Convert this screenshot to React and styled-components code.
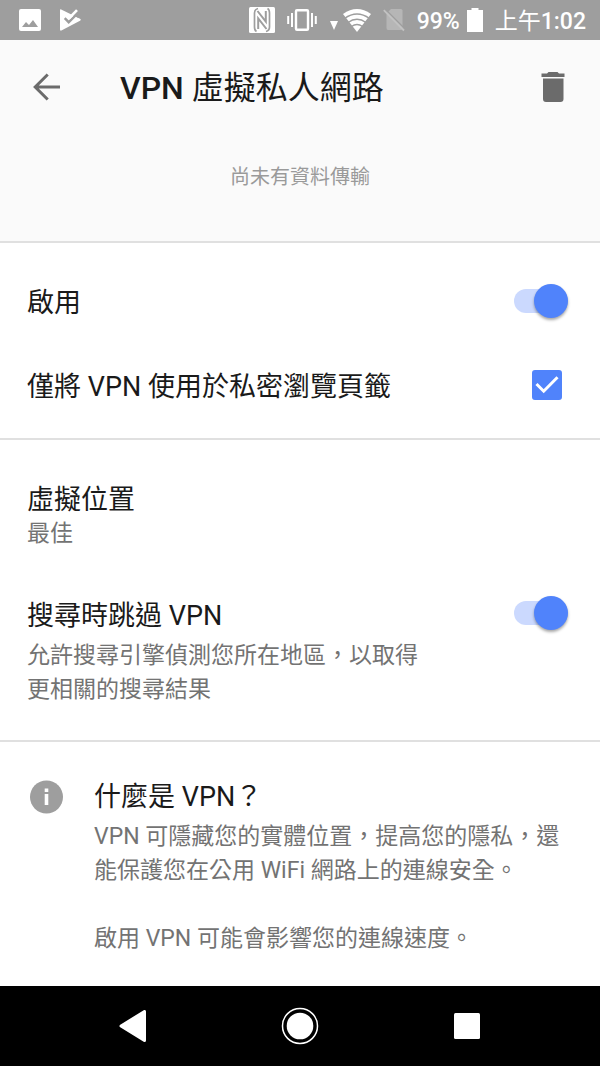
import React, { useState } from 'react';
import styled, { createGlobalStyle } from 'styled-components';

const GlobalStyle = createGlobalStyle`
  * {
    box-sizing: border-box;
  }

  body {
    margin: 0;
    background: #fff;
    color: #1a1a1a;
    font-family: Roboto, 'Noto Sans CJK TC', sans-serif;
  }
`;

const Screen = styled.div`
  display: flex;
  flex-direction: column;
  min-height: 100vh;
`;

const StatusBar = styled.div`
  display: flex;
  align-items: center;
  justify-content: space-between;
  height: 40px;
  padding: 0 14px 0 19px;
  background: #9e9e9e;
  color: #fff;
  font-size: 23px;
  white-space: nowrap;
`;

const StatusGroup = styled.div`
  display: flex;
  align-items: center;
  gap: ${props => props.$gap}px;
`;

const StatusText = styled.span`
  padding-top: 3px;
  font-weight: 500;
  line-height: 37px;
`;

const Regular = styled.span`
  font-weight: 400;
`;

const Header = styled.header`
  background: #fafafa;
  border-bottom: 2px solid #e0e0e0;
`;

const Toolbar = styled.div`
  display: flex;
  align-items: center;
  height: 94px;
  padding: 0 32px 0 27px;
`;

const IconButton = styled.button`
  display: flex;
  padding: 0;
  border: 0;
  background: none;
  color: ${props => props.$color};
  cursor: pointer;
`;

const Title = styled.h1`
  flex: 1;
  margin: 0 0 0 53px;
  padding-top: 2px;
  font-size: 32px;
  font-weight: 400;
  line-height: 40px;
`;

const Strong = styled.span`
  font-weight: 500;
`;

const Usage = styled.p`
  margin: 0;
  padding: 27px 0 48px;
  color: #9a9a9a;
  font-size: 20px;
  line-height: 32px;
  text-align: center;
`;

const Section = styled.section`
  padding: ${props => props.$padding};

  & + & {
    border-top: 2px solid #e0e0e0;
  }
`;

const Row = styled.label`
  display: flex;
  align-items: center;
  justify-content: space-between;
  gap: 80px;
  min-height: 84px;
  cursor: pointer;
`;

const Item = styled.div`
  display: flex;
  align-items: flex-start;
  justify-content: space-between;
  gap: ${props => props.$gap || 0}px;

  & + & {
    margin-top: 45px;
  }
`;

const Label = styled.div`
  padding-top: 3px;
  font-size: 27px;
  line-height: 34px;
`;

const Detail = styled.div`
  margin-top: ${props => (props.$spaced ? 6 : 0)}px;
  color: #737373;
  font-size: 23px;
  line-height: 34px;
`;

const Paragraph = styled.p`
  margin: 0;

  & + & {
    margin-top: 34px;
  }
`;

// the thumb is taller than the track and hangs over it on both sides
const Switch = styled.input.attrs({ type: 'checkbox', role: 'switch' })`
  display: flex;
  flex: none;
  align-items: center;
  width: 54px;
  height: 24px;
  margin: 5px 0;
  appearance: none;
  background: #cbd9fe;
  border-radius: 12px;
  cursor: pointer;

  &::before {
    content: '';
    flex: none;
    width: 34px;
    height: 34px;
    margin-left: 20px;
    border-radius: 50%;
    background: #5083fb;
    box-shadow: 0 2px 3px rgba(0, 0, 0, 0.35);
  }

  &:not(:checked) {
    background: #c4c4c4;
  }

  &:not(:checked)::before {
    margin-left: 0;
    background: #f1f1f1;
  }
`;

const TickBox = styled.span`
  position: relative;
  display: flex;
  margin-right: 6px;

  svg {
    position: absolute;
    inset: 0;
    pointer-events: none;
  }
`;

const Tick = styled.input.attrs({ type: 'checkbox' })`
  width: 30px;
  height: 30px;
  margin: 0;
  appearance: none;
  border: 3px solid #737373;
  border-radius: 3px;
  cursor: pointer;

  &:checked {
    border-color: #5083fb;
    background: #5083fb;
  }
`;

const InfoRow = styled.div`
  display: flex;
  align-items: flex-start;
  gap: 30px;

  > svg {
    flex: none;
    margin-top: 3px;
  }
`;

const NavBar = styled.nav`
  display: grid;
  grid-template-columns: repeat(3, 1fr);
  align-items: center;
  justify-items: center;
  height: 80px;
  margin-top: auto;
  padding: 0 50px;
  background: #000;
`;

const PictureIcon = () => (
  <svg width="22" height="22" viewBox="0 0 22 22">
    <rect width="22" height="22" rx="2" fill="#fff" />
    <path d="M3 18l4-5 3 3 4-5 5 7z" fill="#9e9e9e" />
  </svg>
);

const PlayCheckIcon = () => (
  <svg width="21" height="22" viewBox="0 0 21 22">
    <path d="M0 1.2Q0 0 1.2.5L20 9.8q1.5 1 0 2L1.4 21.5Q0 22 0 20.5z" fill="#fff" />
    <path d="M11.5 0L21 0v8l-3 .8-5.200-2.600z" fill="#9e9e9e" />
    <path d="M4.700 9.200l4 4L18 4" fill="none" stroke="#9e9e9e" strokeWidth="2.4" />
    <path d="M8.700 9.700L17 1.200" fill="none" stroke="#fff" strokeWidth="2.6" />
  </svg>
);

const NfcIcon = () => (
  <svg width="26" height="26" viewBox="0 0 26 26">
    <rect width="26" height="26" rx="1.5" fill="#fff" />
    <path
      d="M9 1.5Q5.500 2.500 5.500 6v14q0 3.500 2 4.500M17 24.500q3.500-1 3.500-4.500V6q0-3.500-2-4.500"
      fill="none"
      stroke="#9e9e9e"
      strokeWidth="1.7"
    />
    <path
      d="M8.500 4l8.300 10.500V4M17.500 22L9.200 11.500V22"
      fill="none"
      stroke="#9e9e9e"
      strokeWidth="2"
    />
  </svg>
);

const VibrateIcon = () => (
  <svg width="30" height="22" viewBox="0 0 30 22" fill="none" stroke="#fff">
    <rect x="9" y="1.2" width="12" height="19.6" rx="1" strokeWidth="2.4" />
    <path d="M1.200 7v8M5 4v14M25 4v14M28.800 7v8" strokeWidth="2" />
  </svg>
);

const DataIcon = () => (
  <svg width="10" height="26" viewBox="0 0 10 26">
    <path d="M1 14h8l-4 9z" fill="#fff" />
  </svg>
);

const WifiIcon = () => (
  <svg width="28" height="23" viewBox="0 0 28 23">
    <path d="M14 23L0 5Q14-5 28 5z" fill="#fff" />
    <path
      d="M1.500 9.500q12.500-9 25 0M5 13.500q9-6.500 18 0M8.500 17.500q5.500-4 11 0"
      fill="none"
      stroke="#9e9e9e"
      strokeWidth="1.5"
    />
  </svg>
);

const NoSimIcon = () => (
  <svg width="22" height="24" viewBox="0 0 22 24">
    <path d="M8 1h10q1.500 0 1.500 1.500V20q0 2-2 2H5q-1.500 0-1.500-2V5.500z" fill="#b6b6b6" />
    <path d="M2 1l20 20" stroke="#9e9e9e" strokeWidth="1.4" />
    <path d="M.8 2.200L21 22.500" stroke="#c2c2c2" strokeWidth="1.8" />
  </svg>
);

const BatteryIcon = () => (
  <svg width="16" height="24" viewBox="0 0 16 24">
    <path d="M4.500 0h7v2H16v22H0V2h4.500z" fill="#fff" />
  </svg>
);

const BackIcon = () => (
  <svg width="40" height="40" viewBox="0 0 40 40" fill="none" stroke="currentColor" strokeWidth="3">
    <path d="M33 20H9M20.700 7.500L8.200 20l12.500 12.500" />
  </svg>
);

const TrashIcon = () => (
  <svg width="30" height="32" viewBox="0 0 30 32" fill="currentColor">
    <path d="M3.500 2.500H9L10.500 1h9L21 2.500h5.500V6h-23zM5 7.500h20.500V28q0 3-3 3H8q-3 0-3-3z" />
  </svg>
);

const InfoIcon = () => (
  <svg width="34" height="34" viewBox="0 0 34 34">
    <circle cx="16.500" cy="17" r="16.5" fill="#9e9e9e" />
    <path d="M14.700 8.500h3.600V12h-3.600zM14.700 14h3.600v11h-3.600z" fill="#fff" />
  </svg>
);

const App = () => {
  const [enabled, setEnabled] = useState(true);
  const [privateOnly, setPrivateOnly] = useState(true);
  const [bypass, setBypass] = useState(true);

  return (
    <Screen>
      <GlobalStyle />
      <StatusBar>
        <StatusGroup $gap={19}>
          <PictureIcon />
          <PlayCheckIcon />
        </StatusGroup>
        <StatusGroup $gap={12}>
          <NfcIcon />
          <VibrateIcon />
          <StatusGroup $gap={4}>
            <DataIcon />
            <WifiIcon />
          </StatusGroup>
          <NoSimIcon />
          <StatusGroup $gap={7}>
            <StatusText>99%</StatusText>
            <BatteryIcon />
          </StatusGroup>
          <StatusText>
            <Regular>上午</Regular>1:02
          </StatusText>
        </StatusGroup>
      </StatusBar>

      <Header>
        <Toolbar>
          <IconButton type="button" aria-label="返回" $color="#6b6b6b">
            <BackIcon />
          </IconButton>
          <Title>
            <Strong>VPN</Strong> 虛擬私人網路
          </Title>
          <IconButton type="button" aria-label="刪除" $color="#6b6b6b">
            <TrashIcon />
          </IconButton>
        </Toolbar>
        <Usage>尚未有資料傳輸</Usage>
      </Header>

      <main>
        <Section $padding="16px 32px 11px 27px">
          <Row>
            <Label>啟用</Label>
            <Switch checked={enabled} onChange={() => setEnabled(!enabled)} />
          </Row>
          <Row>
            <Label>僅將 VPN 使用於私密瀏覽頁籤</Label>
            <TickBox>
              <Tick checked={privateOnly} onChange={() => setPrivateOnly(!privateOnly)} />
              <svg width="30" height="30" viewBox="0 0 30 30">
                <path d="M4.500 14l7.200 7.200L25.500 7.200" fill="none" stroke="#fff" strokeWidth="3" />
              </svg>
            </TickBox>
          </Row>
        </Section>

        <Section $padding="40px 32px 33px 27px">
          <Item>
            <div>
              <Label>虛擬位置</Label>
              <Detail>最佳</Detail>
            </div>
          </Item>
          <Item as="label" $gap={80}>
            <div>
              <Label>搜尋時跳過 VPN</Label>
              <Detail $spaced>允許搜尋引擎偵測您所在地區，以取得更相關的搜尋結果</Detail>
            </div>
            <Switch checked={bypass} onChange={() => setBypass(!bypass)} />
          </Item>
        </Section>

        <Section $padding="35px 32px 30px 30px">
          <InfoRow>
            <InfoIcon />
            <div>
              <Label>什麼是 VPN？</Label>
              <Detail $spaced>
                <Paragraph>VPN 可隱藏您的實體位置，提高您的隱私，還能保護您在公用 WiFi 網路上的連線安全。</Paragraph>
                <Paragraph>啟用 VPN 可能會影響您的連線速度。</Paragraph>
              </Detail>
            </div>
          </InfoRow>
        </Section>
      </main>

      <NavBar>
        <IconButton type="button" aria-label="上一頁" $color="#fff">
          <svg width="28" height="32" viewBox="0 0 28 32">
            <path d="M25.500 1.500v29L2 16z" fill="currentColor" stroke="currentColor" strokeWidth="3" strokeLinejoin="round" />
          </svg>
        </IconButton>
        <IconButton type="button" aria-label="主畫面" $color="#fff">
          <svg width="38" height="38" viewBox="0 0 38 38">
            <circle cx="19" cy="19" r="17.5" fill="none" stroke="currentColor" strokeWidth="1.5" />
            <circle cx="19" cy="19" r="13.3" fill="currentColor" />
          </svg>
        </IconButton>
        <IconButton type="button" aria-label="最近使用" $color="#fff">
          <svg width="26" height="26" viewBox="0 0 26 26">
            <rect width="26" height="26" rx="1.5" fill="currentColor" />
          </svg>
        </IconButton>
      </NavBar>
    </Screen>
  );
};

export default App;
